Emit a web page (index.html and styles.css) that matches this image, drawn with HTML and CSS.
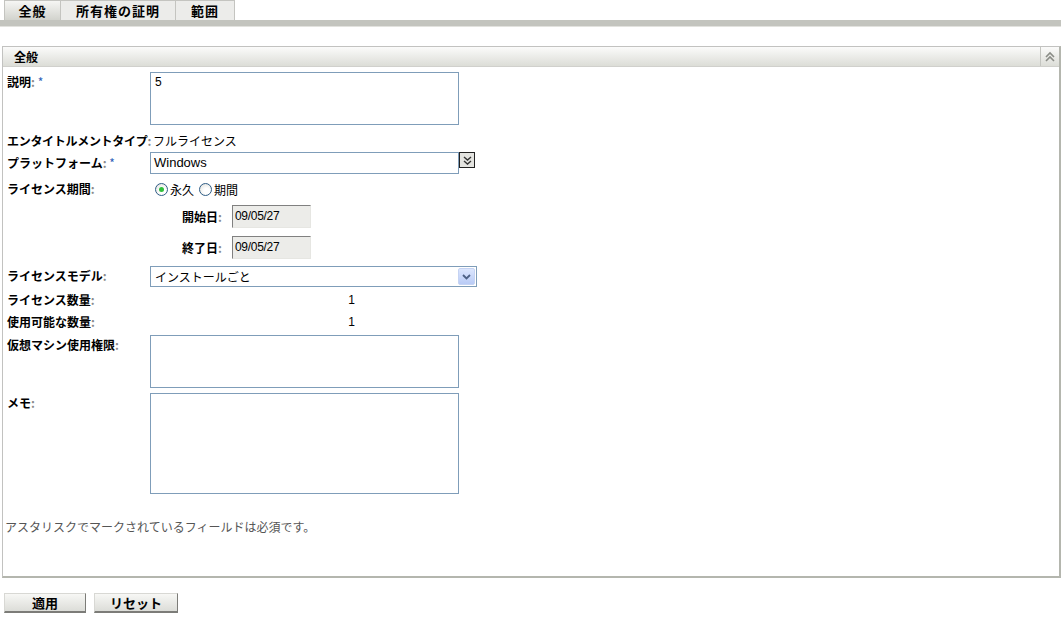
FILE: index.html
```html
<!DOCTYPE html>
<html lang="ja">
<head>
    <meta charset="UTF-8">
    <title>全般</title>
    <link rel="stylesheet" href="styles.css">
</head>
<body>

    <!-- Tabs -->
    <div class="tabbar">
        <div class="tab active">全般</div>
        <div class="tab owner">所有権の証明</div>
        <div class="tab scope">範囲</div>
    </div>

    <!-- General panel -->
    <div class="panel">
        <div class="panel-head">
            <span class="panel-title">全般</span>
            <span class="collapse">
                <svg width="12" height="12" viewBox="0 0 12 12">
                    <path d="M2 6 L6 2 L10 6 M2 10 L6 6 L10 10" fill="none" stroke="#8a8c86" stroke-width="1.6"/>
                </svg>
            </span>
        </div>

        <div class="form">
            <div class="row row-desc">
                <div class="label">説明<span class="colon">:</span> <span class="req">*</span></div>
                <div class="textarea small">5</div>
            </div>

            <div class="row row-type">
                <div class="label auto">エンタイトルメントタイプ<span class="colon">:</span></div>
                <div class="value">フルライセンス</div>
            </div>

            <div class="row row-platform">
                <div class="label">プラットフォーム<span class="colon">:</span> <span class="req">*</span></div>
                <div class="input wide">Windows</div>
                <span class="combo-btn">
                    <svg width="13" height="13" viewBox="0 0 13 13">
                        <path d="M3 3 L6.5 6 L10 3 M3 7 L6.5 10 L10 7" fill="none" stroke="#333" stroke-width="1.4"/>
                    </svg>
                </span>
            </div>

            <div class="row row-period">
                <div class="label">ライセンス期間<span class="colon">:</span></div>
                <div class="radios">
                    <span class="radio checked"></span><span class="radio-text">永久</span>
                    <span class="radio"></span><span class="radio-text">期間</span>
                </div>
            </div>

            <div class="row row-start">
                <div class="label"></div>
                <div class="sublabel">開始日<span class="colon">:</span></div>
                <div class="date">09/05/27</div>
            </div>

            <div class="row row-end">
                <div class="label"></div>
                <div class="sublabel">終了日<span class="colon">:</span></div>
                <div class="date">09/05/27</div>
            </div>

            <div class="row row-model">
                <div class="label">ライセンスモデル<span class="colon">:</span></div>
                <div class="select">
                    <span class="select-text">インストールごと</span>
                    <span class="select-arrow">
                        <svg width="9" height="6" viewBox="0 0 9 6">
                            <path d="M1 1 L4.5 4.5 L8 1" fill="none" stroke="#4d6185" stroke-width="1.8"/>
                        </svg>
                    </span>
                </div>
            </div>

            <div class="row row-count">
                <div class="label">ライセンス数量<span class="colon">:</span></div>
                <div class="number">1</div>
            </div>

            <div class="row row-avail">
                <div class="label">使用可能な数量<span class="colon">:</span></div>
                <div class="number">1</div>
            </div>

            <div class="row row-vm">
                <div class="label">仮想マシン使用権限<span class="colon">:</span></div>
                <div class="textarea small"></div>
            </div>

            <div class="row row-memo">
                <div class="label">メモ<span class="colon">:</span></div>
                <div class="textarea large"></div>
            </div>

            <p class="note">アスタリスクでマークされているフィールドは必須です。</p>
        </div>
    </div>

    <!-- Buttons -->
    <div class="actions">
        <div class="btn">適用</div>
        <div class="btn">リセット</div>
    </div>

</body>
</html>
```

FILE: styles.css
```css
body, html {
    margin: 0;
    padding: 0;
    background: #fff;
    font-family: 'Noto Sans CJK JP', 'Liberation Sans', sans-serif;
    font-size: 12px;
    color: #000;
}

/* Tabs */
.tabbar {
    display: flex;
    padding-left: 4px;
    margin-right: 3px;
    border-bottom: 6px solid #c3c4be;
    box-shadow: 0 1px 0 #e2e2de;
}

.tab {
    box-sizing: border-box;
    height: 20px;
    line-height: 19px;
    text-align: center;
    font-weight: bold;
    font-size: 13px;
    letter-spacing: 1px;
    background: #ececea;
    border: 1px solid #c4c4c0;
    border-bottom: none;
    border-left: none;
}

.tab.active {
    width: 57px;
    border-left: 1px solid #c4c4c0;
    background: linear-gradient(#f6f6f4, #d2d3cd);
}

.tab.owner { width: 115px; }
.tab.scope { width: 59px; }

/* Panel */
.panel {
    margin: 20px 3px 0 2px;
    height: 529px;
    border: 1px solid #c2c2c0;
    border-right-color: #b4b6ae;
    border-bottom: 2px solid #b4b6ae;
    border-right-width: 2px;
}

.panel-head {
    display: flex;
    justify-content: space-between;
    align-items: center;
    height: 19px;
    background: linear-gradient(#fbfbfa, #dcddd7);
    border-bottom: 1px solid #d0d0cc;
}

.panel-title {
    padding-left: 11px;
    font-weight: bold;
}

.collapse {
    display: flex;
    align-items: center;
    justify-content: center;
    width: 18px;
    height: 19px;
    border-left: 1px solid #c4c5c0;
}

/* Form rows */
.form {
    padding-left: 4px;
}

.row {
    display: flex;
    align-items: flex-start;
}

.label {
    width: 143px;
    flex-shrink: 0;
    font-weight: bold;
    line-height: 16px;
}

.label.auto {
    width: auto;
    padding-right: 2px;
    letter-spacing: -0.3px;
}

.colon {
    color: #8a8a8a;
}

.req {
    color: #2d62b8;
    font-weight: normal;
}

.row-desc { margin-top: 5px; }
.row-desc .label { margin-top: 2px; }
.row-type { margin-top: 8px; }
.row-platform { margin-top: 3px; }
.row-platform .label { margin-top: 3px; }
.row-period { margin-top: 7px; }
.row-start { margin-top: 8px; }
.row-end { margin-top: 8px; }
.row-model { margin-top: 7px; }
.row-model .label { margin-top: 2px; }
.row-count { margin-top: 5px; }
.row-avail { margin-top: 6px; }
.row-vm { margin-top: 5px; }
.row-vm .label { margin-top: 2px; }
.row-memo { margin-top: 5px; }
.row-memo .label { margin-top: 2px; }

.textarea {
    box-sizing: border-box;
    width: 309px;
    border: 1px solid #7f9db9;
    padding: 1px 4px;
    font-family: 'Liberation Sans', sans-serif;
    font-size: 12px;
    line-height: 16px;
}

.textarea.small { height: 53px; }
.textarea.large { height: 101px; }

.value {
    line-height: 16px;
}

.input {
    box-sizing: border-box;
    height: 22px;
    line-height: 20px;
    border: 1px solid #7f9db9;
    padding: 0 3px;
    font-family: 'Liberation Sans', sans-serif;
    font-size: 13px;
}

.input.wide { width: 309px; }

.combo-btn {
    box-sizing: border-box;
    width: 16px;
    height: 16px;
    display: flex;
    align-items: center;
    justify-content: center;
    background: #e4e4e0;
    border: 1px solid #222;
}

.radios {
    display: flex;
    align-items: center;
    height: 16px;
    padding-left: 5px;
}

.radio {
    box-sizing: border-box;
    width: 13px;
    height: 13px;
    border-radius: 50%;
    border: 1px solid #2f5d86;
    background: radial-gradient(circle at 60% 65%, #fff 30%, #dcdcd6 100%);
    position: relative;
}

.radio.checked::after {
    content: "";
    position: absolute;
    left: 3px;
    top: 3px;
    width: 5px;
    height: 5px;
    border-radius: 50%;
    background: #2fbf3b;
}

.radio-text {
    margin: 0 5px 0 2px;
}

.sublabel {
    width: 50px;
    margin-left: 32px;
    margin-top: 4px;
    font-weight: bold;
    line-height: 16px;
}

.date {
    box-sizing: border-box;
    width: 79px;
    height: 23px;
    line-height: 21px;
    padding-left: 2px;
    background: #ecece9;
    border: 1px solid #e6e6e2;
    border-top-color: #808080;
    border-left-color: #808080;
    font-family: 'Liberation Sans Narrow', 'Liberation Sans', sans-serif;
    font-size: 12px;
    letter-spacing: -0.3px;
}

.select {
    box-sizing: border-box;
    width: 327px;
    height: 21px;
    display: flex;
    align-items: center;
    justify-content: space-between;
    border: 1px solid #7f9db9;
}

.select-text {
    padding-left: 4px;
    line-height: 16px;
}

.select-arrow {
    box-sizing: border-box;
    width: 17px;
    height: 17px;
    margin-right: 1px;
    display: flex;
    align-items: center;
    justify-content: center;
    background: linear-gradient(#dce6fd, #b9cbf6);
    border: 1px solid #c5d3f3;
    border-radius: 2px;
}

.number {
    width: 205px;
    text-align: right;
    line-height: 16px;
    font-family: 'Liberation Sans', sans-serif;
}

.note {
    margin: 25px 0 0 -2px;
    color: #555;
    line-height: 16px;
}

/* Buttons */
.actions {
    display: flex;
    gap: 8px;
    margin: 15px 0 0 4px;
}

.btn {
    box-sizing: border-box;
    height: 20px;
    line-height: 17px;
    text-align: center;
    font-weight: bold;
    font-size: 13px;
    background: linear-gradient(#f7f7f5, #dcddd8);
    border: 1px solid #d8d8d4;
    border-right-color: #7c7c78;
    border-bottom: 2px solid #7c7c78;
}

.btn:first-child { width: 82px; }
.btn:last-child { width: 84px; }
```
